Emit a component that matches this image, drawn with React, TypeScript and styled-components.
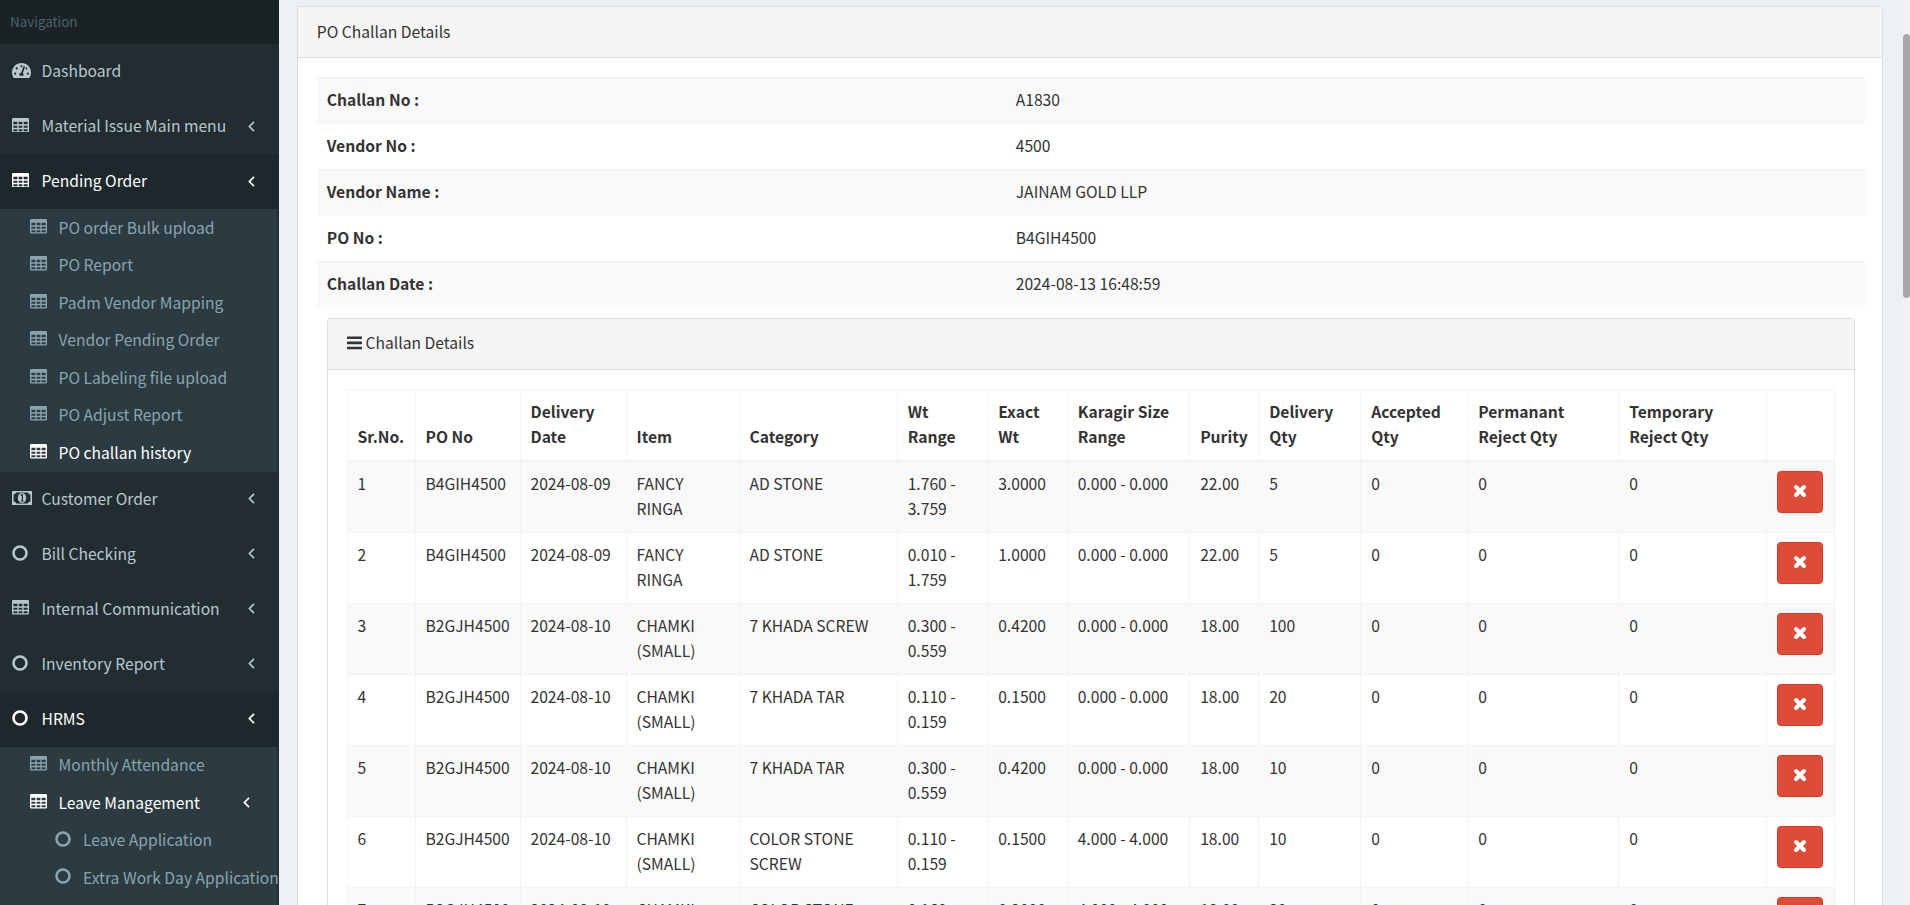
import React from "react";
import styled, { createGlobalStyle } from "styled-components";
import { FaTachometerAlt } from "react-icons/fa";

const Global = createGlobalStyle`
  html, body { margin: 0; padding: 0; height: 905px; overflow: hidden; }
  body {
    font-family: "Noto Sans CJK SC", "Noto Sans", sans-serif;
    font-size: 15.65px;
    line-height: 25px;
    color: #333;
    background: #ecf0f5;
  }
  * { box-sizing: border-box; }
`;

const Page = styled.div`
  display: flex;
  width: 1910px;
  height: 905px;
  overflow: hidden;
`;

const Sidebar = styled.nav`
  flex: 0 0 279px;
  height: 905px;
  background: #222d32;
  overflow: hidden;
`;

const NavHeader = styled.div`
  height: 44px;
  padding: 9px 0 0 10px;
  background: #1a2226;
  color: #4b646f;
  font-size: 13.4px;
  line-height: 25px;
`;

const NavRow = styled.div<{ $active?: boolean }>`
  display: flex;
  align-items: center;
  height: 55px;
  padding: 0 0 2px 12px;
  background: ${(p) => (p.$active ? "#1e282c" : "transparent")};
  color: ${(p) => (p.$active ? "#fff" : "#b8c7ce")};
  white-space: nowrap;
`;

const NavIconSlot = styled.span`
  flex: 0 0 29.5px;
  display: flex;
  align-items: center;
  margin-top: -1px;
`;

const NavLabel = styled.span`
  flex: 1;
`;

const Chevron = styled.svg`
  flex: 0 0 7px;
  width: 7px;
  height: 11px;
  margin-right: 24px;
  margin-top: 1px;
`;

const SubMenu = styled.div`
  width: 277px;
  background: #2c3b41;
`;

const FullSubMenu = styled(SubMenu)`
  padding-bottom: 30px;
`;

const SubRow = styled.div<{ $active?: boolean; $deep?: boolean }>`
  display: flex;
  align-items: center;
  height: 37.5px;
  padding: 1px 0 2px ${(p) => (p.$deep ? "55px" : "30px")};
  color: ${(p) => (p.$active ? "#fff" : "#8aa4af")};
  white-space: nowrap;
`;

const SubIconSlot = styled.span`
  flex: 0 0 28.5px;
  display: flex;
  align-items: center;
  margin-top: -2px;
`;

const DeepIconSlot = styled(SubIconSlot)`
  flex-basis: 28px;
`;

const SubChevron = styled(Chevron)`
  margin-right: 27px;
`;

const Main = styled.main`
  flex: 1;
  min-width: 0;
  height: 905px;
  padding: 6px 20px 0 18px;
  overflow: hidden;
`;

const Panel = styled.section`
  background: #fff;
  border: 1px solid #ddd;
  border-radius: 4px;
`;

const PanelHead = styled.header`
  display: flex;
  align-items: center;
  height: 51px;
  padding: 0 18.75px 2px;
  background: #f5f5f5;
  border-bottom: 1px solid #ddd;
  border-radius: 3px 3px 0 0;
  color: #333;
`;

const InnerHead = styled(PanelHead)`
  padding-bottom: 3px;
`;

const PanelBody = styled.div`
  padding: 18.75px 17.5px 18.75px 18.75px;
`;

const InnerPanel = styled(Panel)`
  margin: 11px 10px 0;
`;

const BarsIcon = styled.svg`
  width: 15px;
  height: 14px;
  margin-right: 4px;
  margin-top: 1px;
`;

const InfoTable = styled.table`
  width: 1548px;
  border-collapse: collapse;
  table-layout: fixed;
`;

const InfoRow = styled.tr`
  height: 46px;
  border-top: 1px solid #f4f4f4;
  &:nth-child(odd) { background: #f9f9f9; }
`;

const InfoLabel = styled.th`
  width: 689px;
  padding: 0 10px 2px;
  text-align: left;
  font-weight: 700;
`;

const InfoValue = styled.td`
  padding: 0 10px 2px;
`;

const DataTable = styled.table`
  width: 1487.5px;
  border-collapse: collapse;
  table-layout: fixed;
`;

const Col = styled.col<{ $w: number }>`
  width: ${(p) => p.$w}px;
`;

const HeadCell = styled.th`
  padding: 9px 10px 11px;
  border: 1px solid #f4f4f4;
  border-bottom-width: 2px;
  text-align: left;
  vertical-align: bottom;
  font-weight: 700;
  line-height: 25px;
`;

const DataRow = styled.tr`
  &:nth-child(odd) { background: #f9f9f9; }
`;

const DataCell = styled.td`
  height: 71px;
  padding: 9px 10px 11px;
  border: 1px solid #f4f4f4;
  vertical-align: top;
  line-height: 25px;
`;

const DeleteButton = styled.button`
  display: flex;
  align-items: center;
  justify-content: center;
  width: 46px;
  height: 42px;
  padding: 0;
  background: #dd4b39;
  border: 1px solid #d73925;
  border-radius: 3.75px;
`;

const TimesSvg = styled.svg`
  width: 14px;
  height: 14px;
  margin-top: -2px;
`;

const ScrollTrack = styled.div`
  flex: 0 0 7px;
  height: 905px;
  padding-top: 34px;
  background: #f1f1f1;
`;

const ScrollThumb = styled.div`
  height: 264px;
  background: #a8a8a8;
  border-radius: 4px;
`;

const TableIcon = ({ size = 17 }: { size?: number }) => (
  <svg width={size} height={size * 0.86} viewBox="0 0 20 17" fill="currentColor" fillRule="evenodd" aria-hidden="true">
    <path d="M1.5 0h17A1.5 1.5 0 0 1 20 1.5v14a1.5 1.5 0 0 1-1.5 1.5h-17A1.5 1.5 0 0 1 0 15.5v-14A1.5 1.5 0 0 1 1.5 0zM1.6 4.4v3h4.7v-3zM7.8 4.4v3h4.4v-3zM13.7 4.4v3h4.7v-3zM1.6 8.9v2.6h4.7V8.9zM7.8 8.9v2.6h4.4V8.9zM13.7 8.9v2.6h4.7V8.9zM1.6 13v2.4h4.7V13zM7.8 13v2.4h4.4V13zM13.7 13v2.4h4.7V13z" />
  </svg>
);

const RingIcon = () => (
  <svg width="16" height="16" viewBox="0 0 16 16" fill="none" stroke="currentColor" strokeWidth="2.6" aria-hidden="true">
    <circle cx="8" cy="8" r="6.5" />
  </svg>
);

const MoneyIcon = () => (
  <svg width="20" height="14" viewBox="0 0 20 14" aria-hidden="true">
    <path fill="currentColor" fillRule="evenodd" d="M0 0h20v14H0zM1.6 3.4v7.2a2.6 2.6 0 0 1 2.6 1.8h11.6a2.6 2.6 0 0 1 2.6-1.8V3.4a2.6 2.6 0 0 1-2.6-1.8H4.2a2.6 2.6 0 0 1-2.6 1.8z" />
    <ellipse cx="10" cy="7" rx="4.2" ry="5" fill="currentColor" />
    <path d="M8.6 4.6 10.4 3.6V9.6M8.8 10H11.6" stroke="#222d32" strokeWidth="1.2" fill="none" />
  </svg>
);

const ChevronGlyph = () => (
  <Chevron viewBox="0 0 7 11" fill="none" stroke="currentColor" strokeWidth="1.7" aria-hidden="true">
    <path d="M6 .8 1.4 5.5 6 10.2" />
  </Chevron>
);

const SubChevronGlyph = () => (
  <SubChevron viewBox="0 0 7 11" fill="none" stroke="currentColor" strokeWidth="1.7" aria-hidden="true">
    <path d="M6 .8 1.4 5.5 6 10.2" />
  </SubChevron>
);

const TimesIcon = () => (
  <TimesSvg viewBox="0 0 14 14" fill="none" stroke="#fff" strokeWidth="4" strokeLinecap="round" aria-hidden="true">
    <path d="M3 3l8 8M11 3l-8 8" />
  </TimesSvg>
);

const colWidths = [68, 105, 106, 113, 158.2, 90.5, 79.5, 122.5, 69, 102, 107, 151, 148, 67.8];

const headers = [
  ["Sr.No."],
  ["PO No"],
  ["Delivery", "Date"],
  ["Item"],
  ["Category"],
  ["Wt", "Range"],
  ["Exact", "Wt"],
  ["Karagir Size", "Range"],
  ["Purity"],
  ["Delivery", "Qty"],
  ["Accepted", "Qty"],
  ["Permanant", "Reject Qty"],
  ["Temporary", "Reject Qty"],
  [""],
];

type Row = {
  po: string;
  date: string;
  item: string[];
  cat: string[];
  range: string[];
  wt: string;
  size: string;
  purity: string;
  qty: string;
};

const rows: Row[] = [
  { po: "B4GIH4500", date: "2024-08-09", item: ["FANCY", "RINGA"], cat: ["AD STONE"], range: ["1.760 -", "3.759"], wt: "3.0000", size: "0.000 - 0.000", purity: "22.00", qty: "5" },
  { po: "B4GIH4500", date: "2024-08-09", item: ["FANCY", "RINGA"], cat: ["AD STONE"], range: ["0.010 -", "1.759"], wt: "1.0000", size: "0.000 - 0.000", purity: "22.00", qty: "5" },
  { po: "B2GJH4500", date: "2024-08-10", item: ["CHAMKI", "(SMALL)"], cat: ["7 KHADA SCREW"], range: ["0.300 -", "0.559"], wt: "0.4200", size: "0.000 - 0.000", purity: "18.00", qty: "100" },
  { po: "B2GJH4500", date: "2024-08-10", item: ["CHAMKI", "(SMALL)"], cat: ["7 KHADA TAR"], range: ["0.110 -", "0.159"], wt: "0.1500", size: "0.000 - 0.000", purity: "18.00", qty: "20" },
  { po: "B2GJH4500", date: "2024-08-10", item: ["CHAMKI", "(SMALL)"], cat: ["7 KHADA TAR"], range: ["0.300 -", "0.559"], wt: "0.4200", size: "0.000 - 0.000", purity: "18.00", qty: "10" },
  { po: "B2GJH4500", date: "2024-08-10", item: ["CHAMKI", "(SMALL)"], cat: ["COLOR STONE", "SCREW"], range: ["0.110 -", "0.159"], wt: "0.1500", size: "4.000 - 4.000", purity: "18.00", qty: "10" },
  { po: "B2GJH4500", date: "2024-08-10", item: ["CHAMKI", "(SMALL)"], cat: ["COLOR STONE", "SCREW"], range: ["0.160 -", "0.299"], wt: "0.2000", size: "4.000 - 4.000", purity: "18.00", qty: "30" },
];

const info = [
  ["Challan No :", "A1830"],
  ["Vendor No :", "4500"],
  ["Vendor Name :", "JAINAM GOLD LLP"],
  ["PO No :", "B4GIH4500"],
  ["Challan Date :", "2024-08-13 16:48:59"],
];

const poItems = ["PO order Bulk upload", "PO Report", "Padm Vendor Mapping", "Vendor Pending Order", "PO Labeling file upload", "PO Adjust Report"];

const Lines = ({ parts }: { parts: string[] }) => (
  <>
    {parts.map((t, i) => (
      <React.Fragment key={i}>
        {i > 0 && <br />}
        {t}
      </React.Fragment>
    ))}
  </>
);

export default function App() {
  return (
    <Page>
      <Global />
      <Sidebar>
        <NavHeader>Navigation</NavHeader>
        <NavRow>
          <NavIconSlot><FaTachometerAlt size={19} /></NavIconSlot>
          <NavLabel>Dashboard</NavLabel>
        </NavRow>
        <NavRow>
          <NavIconSlot><TableIcon /></NavIconSlot>
          <NavLabel>Material Issue Main menu</NavLabel>
          <ChevronGlyph />
        </NavRow>
        <NavRow $active>
          <NavIconSlot><TableIcon /></NavIconSlot>
          <NavLabel>Pending Order</NavLabel>
          <ChevronGlyph />
        </NavRow>
        <SubMenu>
          {poItems.map((t) => (
            <SubRow key={t}>
              <SubIconSlot><TableIcon /></SubIconSlot>
              <span>{t}</span>
            </SubRow>
          ))}
          <SubRow $active>
            <SubIconSlot><TableIcon /></SubIconSlot>
            <span>PO challan history</span>
          </SubRow>
        </SubMenu>
        <NavRow>
          <NavIconSlot><MoneyIcon /></NavIconSlot>
          <NavLabel>Customer Order</NavLabel>
          <ChevronGlyph />
        </NavRow>
        <NavRow>
          <NavIconSlot><RingIcon /></NavIconSlot>
          <NavLabel>Bill Checking</NavLabel>
          <ChevronGlyph />
        </NavRow>
        <NavRow>
          <NavIconSlot><TableIcon /></NavIconSlot>
          <NavLabel>Internal Communication</NavLabel>
          <ChevronGlyph />
        </NavRow>
        <NavRow>
          <NavIconSlot><RingIcon /></NavIconSlot>
          <NavLabel>Inventory Report</NavLabel>
          <ChevronGlyph />
        </NavRow>
        <NavRow $active>
          <NavIconSlot><RingIcon /></NavIconSlot>
          <NavLabel>HRMS</NavLabel>
          <ChevronGlyph />
        </NavRow>
        <FullSubMenu>
          <SubRow>
            <SubIconSlot><TableIcon /></SubIconSlot>
            <span>Monthly Attendance</span>
          </SubRow>
          <SubRow $active>
            <SubIconSlot><TableIcon /></SubIconSlot>
            <NavLabel>Leave Management</NavLabel>
            <SubChevronGlyph />
          </SubRow>
          <SubRow $deep>
            <DeepIconSlot><RingIcon /></DeepIconSlot>
            <span>Leave Application</span>
          </SubRow>
          <SubRow $deep>
            <DeepIconSlot><RingIcon /></DeepIconSlot>
            <span>Extra Work Day Application</span>
          </SubRow>
        </FullSubMenu>
      </Sidebar>

      <Main>
        <Panel>
          <PanelHead>PO Challan Details</PanelHead>
          <PanelBody>
            <InfoTable>
              <tbody>
                {info.map(([k, v]) => (
                  <InfoRow key={k}>
                    <InfoLabel>{k}</InfoLabel>
                    <InfoValue>{v}</InfoValue>
                  </InfoRow>
                ))}
              </tbody>
            </InfoTable>
            <InnerPanel>
              <InnerHead>
                <BarsIcon viewBox="0 0 15 14" fill="currentColor" aria-hidden="true">
                  <rect y="0.5" width="15" height="2.6" rx="0.5" />
                  <rect y="5.6" width="15" height="2.6" rx="0.5" />
                  <rect y="10.7" width="15" height="2.6" rx="0.5" />
                </BarsIcon>
                Challan Details
              </InnerHead>
              <PanelBody>
                <DataTable>
                  <colgroup>
                    {colWidths.map((w, i) => (
                      <Col key={i} $w={w} />
                    ))}
                  </colgroup>
                  <thead>
                    <tr>
                      {headers.map((h, i) => (
                        <HeadCell key={i}><Lines parts={h} /></HeadCell>
                      ))}
                    </tr>
                  </thead>
                  <tbody>
                    {rows.map((r, i) => (
                      <DataRow key={i}>
                        <DataCell>{i + 1}</DataCell>
                        <DataCell>{r.po}</DataCell>
                        <DataCell>{r.date}</DataCell>
                        <DataCell><Lines parts={r.item} /></DataCell>
                        <DataCell><Lines parts={r.cat} /></DataCell>
                        <DataCell><Lines parts={r.range} /></DataCell>
                        <DataCell>{r.wt}</DataCell>
                        <DataCell>{r.size}</DataCell>
                        <DataCell>{r.purity}</DataCell>
                        <DataCell>{r.qty}</DataCell>
                        <DataCell>0</DataCell>
                        <DataCell>0</DataCell>
                        <DataCell>0</DataCell>
                        <DataCell>
                          <DeleteButton aria-label="Remove"><TimesIcon /></DeleteButton>
                        </DataCell>
                      </DataRow>
                    ))}
                  </tbody>
                </DataTable>
              </PanelBody>
            </InnerPanel>
          </PanelBody>
        </Panel>
      </Main>

      <ScrollTrack>
        <ScrollThumb />
      </ScrollTrack>
    </Page>
  );
}
